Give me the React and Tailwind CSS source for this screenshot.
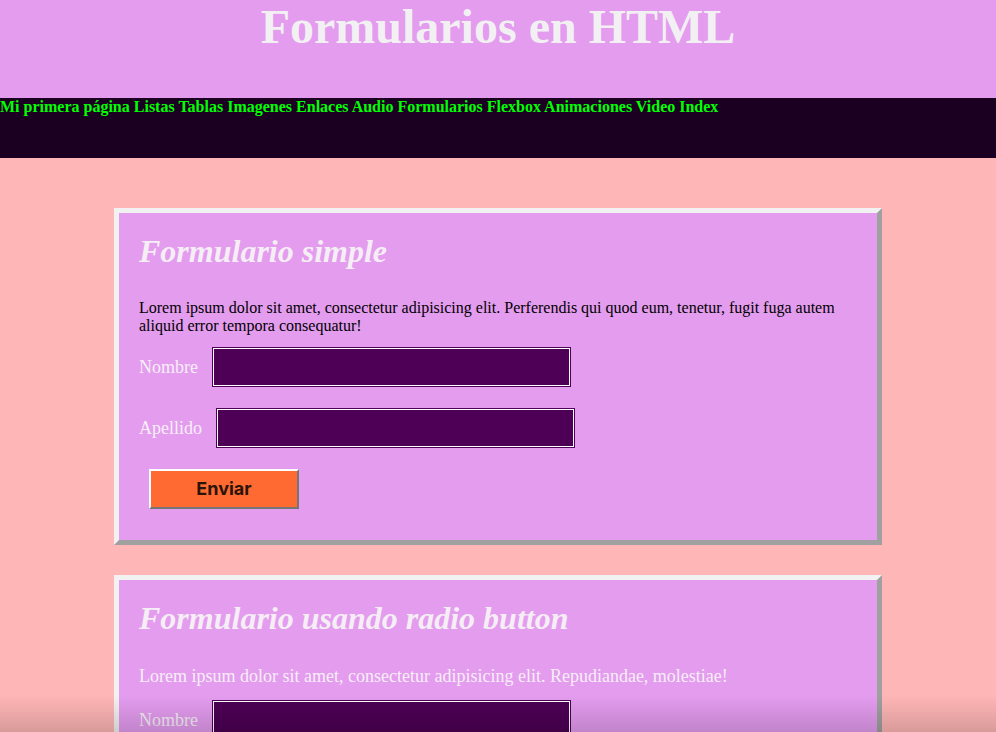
import React from 'react';

const navLinks = ['Mi primera página', 'Listas', 'Tablas', 'Imagenes', 'Enlaces', 'Audio', 'Formularios', 'Flexbox', 'Animaciones', 'Video', 'Index'];

function Field({ label }) {
  return (
    <div className="flex items-center gap-[14px]">
      <label className="text-[18px] leading-[20px] text-[#f7eef7]">{label}</label>
      <input
        type="text"
        className="m-[1px] h-[38px] w-[357px] border border-white bg-[#4d0055] shadow-[0_0_0_1px_#4d0055] outline-none"
      />
    </div>
  );
}

function Card({ title, children }) {
  return (
    <section className="mx-auto w-[768px] border-[5px] border-solid border-t-[#f2f2f2] border-l-[#f2f2f2] border-r-[#a0a0a0] border-b-[#a0a0a0] bg-[#e49cef] px-[20px] pt-[20px] pb-[31px]">
      <h2 className="mb-[29px] text-[32px] leading-[37px] font-bold italic text-[#f5eef5]">{title}</h2>
      {children}
    </section>
  );
}

export default function App() {
  return (
    <div className="min-h-screen bg-[#ffb6b6] pb-[40px] font-['Liberation_Serif',serif] text-[16px] leading-[18px]">
      {/* Header */}
      <header className="h-[98px] bg-[#e49cef]">
        <h1 className="text-center text-[48px] leading-[54px] font-bold text-[#f3f0f3]">Formularios en HTML</h1>
      </header>

      {/* Nav */}
      <nav className="h-[60px] bg-[#1b0022] font-bold">
        {navLinks.map((l, i) => (
          <React.Fragment key={l}>
            <a href="#" className="text-[#00ff00]">{l}</a>
            {i < navLinks.length - 1 && ' '}
          </React.Fragment>
        ))}
      </nav>

      <main className="flex flex-col gap-[30px] pt-[50px]">
        <Card title="Formulario simple">
          <p className="mb-[12px] text-black">
            Lorem ipsum dolor sit amet, consectetur adipisicing elit. Perferendis qui quod eum, tenetur, fugit fuga autem aliquid error tempora consequatur!
          </p>
          <form className="flex flex-col gap-[21px]" onSubmit={(e) => e.preventDefault()}>
            <Field label="Nombre" />
            <Field label="Apellido" />
            <div className="pl-[10px]">
              <button
                type="submit"
                className="h-[40px] w-[150px] border-2 border-solid border-t-white border-l-white border-r-[#767676] border-b-[#767676] bg-[#ff6a33] font-['Inter',sans-serif] text-[18px] font-bold text-[#2a1408]"
              >
                Enviar
              </button>
            </div>
          </form>
        </Card>

        <Card title="Formulario usando radio button">
          <p className="mb-[13px] text-[18px] leading-[21px] text-[#f7eef7]">
            Lorem ipsum dolor sit amet, consectetur adipisicing elit. Repudiandae, molestiae!
          </p>
          <form className="flex flex-col gap-[21px]" onSubmit={(e) => e.preventDefault()}>
            <Field label="Nombre" />
            <Field label="Apellido" />
            <div className="flex items-center gap-3 text-[18px] text-[#f7eef7]">
              <label className="flex items-center gap-1"><input type="radio" name="sexo" /> Masculino</label>
              <label className="flex items-center gap-1"><input type="radio" name="sexo" /> Femenino</label>
            </div>
          </form>
        </Card>
      </main>

      {/* bottom scroll shade */}
      <div className="pointer-events-none fixed inset-x-0 bottom-0 h-[36px] bg-gradient-to-b from-transparent to-black/15" />
    </div>
  );
}
